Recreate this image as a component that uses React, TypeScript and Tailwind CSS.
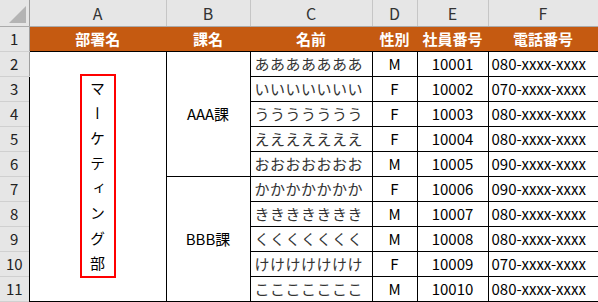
const rows = [
  { n: 2, name: 'あああああああ', sex: 'M', id: '10001', tel: '080-xxxx-xxxx' },
  { n: 3, name: 'いいいいいいい', sex: 'F', id: '10002', tel: '070-xxxx-xxxx' },
  { n: 4, name: 'ううううううう', sex: 'F', id: '10003', tel: '080-xxxx-xxxx' },
  { n: 5, name: 'えええええええ', sex: 'F', id: '10004', tel: '080-xxxx-xxxx' },
  { n: 6, name: 'おおおおおおお', sex: 'M', id: '10005', tel: '090-xxxx-xxxx' },
  { n: 7, name: 'かかかかかかか', sex: 'F', id: '10006', tel: '090-xxxx-xxxx' },
  { n: 8, name: 'ききききききき', sex: 'M', id: '10007', tel: '080-xxxx-xxxx' },
  { n: 9, name: 'くくくくくくく', sex: 'M', id: '10008', tel: '080-xxxx-xxxx' },
  { n: 10, name: 'けけけけけけけ', sex: 'F', id: '10009', tel: '070-xxxx-xxxx' },
  { n: 11, name: 'こここここここ', sex: 'M', id: '10010', tel: '080-xxxx-xxxx' },
]

const dept = ['マ', 'ー', 'ケ', 'テ', 'ィ', 'ン', 'グ', '部']

// 列見出し (A〜F)
const colHeads = ['A', 'B', 'C', 'D', 'E', 'F']
const titles = ['部署名', '課名', '名前', '性別', '社員番号', '電話番号']

const rowHead = 'bg-[#e6e6e6] text-[#222] text-center border-r border-r-[#9e9e9e] border-b border-b-[#d0d0d0] p-0'
const cell = 'border border-black p-0 text-center'

export default function App() {
  return (
    <div className="w-[598px] h-[302px] bg-white overflow-hidden font-['Noto_Sans_CJK_JP',sans-serif] text-[15px] leading-none text-black">
      <table className="table-fixed border-collapse w-[598px]">
        <colgroup>
          <col className="w-[29px]" />
          <col className="w-[137px]" />
          <col className="w-[84px]" />
          <col className="w-[122px]" />
          <col className="w-[45px]" />
          <col className="w-[71px]" />
          <col className="w-[110px]" />
        </colgroup>
        <tbody>
          <tr className="h-[26px]">
            <td className="bg-[#e6e6e6] border-r border-r-[#9e9e9e] border-b border-b-[#ababab] p-0">
              <div className="flex justify-end items-end h-[25px] pr-[3px] pb-[2px]">
                <svg width="17" height="17" viewBox="0 0 17 17">
                  <polygon points="17,0 17,17 0,17" fill="#b4b4b4" />
                </svg>
              </div>
            </td>
            {colHeads.map(c => (
              <td key={c} className="bg-[#e6e6e6] text-[#333] text-center text-[16px] border-r border-r-[#c6c6c6] border-b border-b-[#ababab] p-0">
                {c}
              </td>
            ))}
          </tr>
          <tr className="h-[25px]">
            <td className={rowHead}>1</td>
            {titles.map(t => (
              <td key={t} className="bg-[#c55a11] text-white font-bold text-center border-b border-b-black p-0">
                {t}
              </td>
            ))}
          </tr>
          {rows.map((r, i) => (
            <tr key={r.n} className="h-[25px]">
              <td className={rowHead}>{r.n}</td>
              {i === 0 && (
                <td rowSpan={10} className={cell}>
                  <div className="flex justify-center">
                    <div className="flex flex-col items-center w-[36px] py-[0px] border-2 border-[#ff0000]">
                      {dept.map((ch, k) => (
                        <span key={k} className="h-[25px] flex items-center justify-center [writing-mode:vertical-rl]">
                          {ch}
                        </span>
                      ))}
                    </div>
                  </div>
                </td>
              )}
              {(i === 0 || i === 5) && (
                <td rowSpan={5} className={cell}>{i === 0 ? 'AAA課' : 'BBB課'}</td>
              )}
              <td className={`${cell} text-left pl-[4px] tracking-[0.5px] text-[#333]`}>{r.name}</td>
              <td className={cell}>{r.sex}</td>
              <td className={cell}>{r.id}</td>
              <td className={`${cell} text-left pl-[3px]`}>{r.tel}</td>
            </tr>
          ))}
        </tbody>
      </table>
    </div>
  )
}
